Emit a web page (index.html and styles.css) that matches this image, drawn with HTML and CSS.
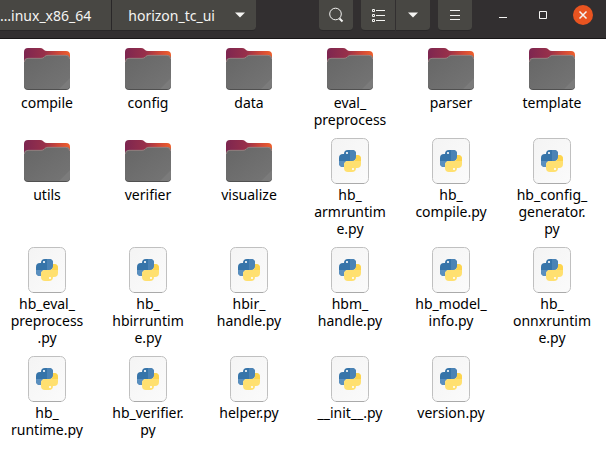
FILE: index.html
```html
<!DOCTYPE html>
<html lang="en">
<head>
<meta charset="utf-8">
<title>horizon_tc_ui</title>
<link rel="stylesheet" href="styles.css">
</head>
<body>
<svg class="defs" aria-hidden="true">
  <defs>
    <linearGradient id="back" x1="0" y1="0" x2="1" y2="0">
      <stop offset="0" stop-color="#7d2650"/><stop offset="0.45" stop-color="#98304a"/><stop offset="0.75" stop-color="#cf4838"/><stop offset="1" stop-color="#f0602c"/>
    </linearGradient>
    <linearGradient id="front" x1="0" y1="0" x2="1" y2="1">
      <stop offset="0" stop-color="#666"/><stop offset="1" stop-color="#757575"/>
    </linearGradient>
    <linearGradient id="sheet" x1="0" y1="0" x2="1" y2="1">
      <stop offset="0" stop-color="#f4f4f4"/><stop offset="1" stop-color="#fbfbfb"/>
    </linearGradient>
    <path id="snake" d="M18 17a4 4 0 0 1 4-4h4a4 4 0 0 1 4 4v3a4 4 0 0 1-4 4h-4a4 4 0 0 0-4 4v2h-1a4 4 0 0 1-4-4v-5a4 4 0 0 1 4-4z"/>
  </defs>
  <symbol id="folder" viewBox="0 0 48 48">
    <path fill="url(#back)" d="M1 7q0-4 4-4h12q2 0 3 1l1 1q1 1 3 1h19q4 0 4 4v12H1z"/>
    <path fill="#505050" d="M1 30h46v11q0 4-4 4H5q-4 0-4-4z"/>
    <path fill="url(#front)" d="M1 17q0-4 4-4h13q2 0 3-1l1-1q1-1 3-1h18q4 0 4 4v26q0 4-4 4H5q-4 0-4-4z"/>
    <path fill="none" stroke="#a8898a" stroke-width=".7" d="M1.400 17q0-3.700 3.600-3.700h13q2 0 3-1l1-1q1-1 3-1h18q3.600 0 3.600 3.700"/>
    <path fill="#7b7b7b" d="M47 33v7q0 4-4 4h-7z"/>
  </symbol>
  <symbol id="pyfile" viewBox="0 0 48 48">
    <rect x="5.500" y="1.500" width="37" height="45" rx="5" fill="url(#sheet)" stroke="#c0c0c0"/>
    <path stroke="#aaa" d="M10 46.500h28"/>
    <use href="#snake" fill="#3674a9"/>
    <path fill="#5a8fbf" d="M13 24h6.500a4 4 0 0 0-1.500 4v2h-1a4 4 0 0 1-4-4z"/>
    <path fill="#4b83b5" d="M24 13h2a4 4 0 0 1 4 4v3a4 4 0 0 1-4 4h-2z"/>
    <use href="#snake" fill="#ffe070" transform="rotate(180 24 24)"/>
    <path fill="#fdd44d" d="M35 24h-6.500a4 4 0 0 0 1.500-4v-2h1a4 4 0 0 1 4 4z"/>
    <circle cx="21" cy="16" r="1.100" fill="#fff"/>
    <circle cx="27" cy="32" r="1.100" fill="#fff"/>
  </symbol>
</svg>
<header class="bar">
  <nav class="path" aria-label="Location">
    <button class="crumb parent">…inux_x86_64</button>
    <button class="crumb current"><span>horizon_tc_ui</span><svg class="arrow" viewBox="0 0 10 6"><path d="M0 .5h10L5 5.500z"/></svg></button>
  </nav>
  <div class="tools">
    <button class="tool" aria-label="Search"><svg viewBox="0 0 16 16"><circle cx="7.500" cy="7" r="5.800"/><path stroke-width="2" d="M11.500 11.500L14.500 14.500"/></svg></button>
    <div class="group">
      <button class="tool" aria-label="List view"><svg viewBox="0 0 16 16"><path d="M6 3.500h9M6 8.500h9M6 13.500h9"/><path d="M2.500 2.500h2v2h-2zM2.500 7.500h2v2h-2zM2.500 12.500h2v2h-2z"/></svg></button>
      <button class="tool" aria-label="View options"><svg class="arrow" viewBox="0 0 10 6"><path d="M0 .5h10L5 5.500z"/></svg></button>
    </div>
    <button class="tool" aria-label="Menu"><svg viewBox="0 0 16 16"><path d="M3 3.500h10M3 8.500h10M3 12.500h10"/></svg></button>
  </div>
  <div class="controls">
    <button class="control" aria-label="Minimize"><svg viewBox="0 0 20 20"><path d="M6 12.500h8"/></svg></button>
    <button class="control" aria-label="Maximize"><svg viewBox="0 0 20 20"><path d="M6.500 6.500h7v7h-7z"/></svg></button>
    <button class="control close" aria-label="Close"><svg viewBox="0 0 20 20"><path stroke-width="1.500" d="M6.500 6.500l7 7M13.500 6.500l-7 7"/></svg></button>
  </div>
</header>
<main>
  <ul class="files">
    <li><svg><use href="#folder"/></svg><span>compile</span></li>
    <li><svg><use href="#folder"/></svg><span>config</span></li>
    <li><svg><use href="#folder"/></svg><span>data</span></li>
    <li><svg><use href="#folder"/></svg><span>eval_<br>preprocess</span></li>
    <li><svg><use href="#folder"/></svg><span>parser</span></li>
    <li><svg><use href="#folder"/></svg><span>template</span></li>
    <li><svg><use href="#folder"/></svg><span>utils</span></li>
    <li><svg><use href="#folder"/></svg><span>verifier</span></li>
    <li><svg><use href="#folder"/></svg><span>visualize</span></li>
    <li><svg><use href="#pyfile"/></svg><span>hb_<br>armruntim<br>e.py</span></li>
    <li><svg><use href="#pyfile"/></svg><span>hb_<br>compile.py</span></li>
    <li><svg><use href="#pyfile"/></svg><span>hb_config_<br>generator.<br>py</span></li>
    <li><svg><use href="#pyfile"/></svg><span>hb_eval_<br>preprocess<br>.py</span></li>
    <li><svg><use href="#pyfile"/></svg><span>hb_<br>hbirruntim<br>e.py</span></li>
    <li><svg><use href="#pyfile"/></svg><span>hbir_<br>handle.py</span></li>
    <li><svg><use href="#pyfile"/></svg><span>hbm_<br>handle.py</span></li>
    <li><svg><use href="#pyfile"/></svg><span>hb_model_<br>info.py</span></li>
    <li><svg><use href="#pyfile"/></svg><span>hb_<br>onnxruntim<br>e.py</span></li>
    <li><svg><use href="#pyfile"/></svg><span>hb_<br>runtime.py</span></li>
    <li><svg><use href="#pyfile"/></svg><span>hb_verifier.<br>py</span></li>
    <li><svg><use href="#pyfile"/></svg><span>helper.py</span></li>
    <li><svg><use href="#pyfile"/></svg><span>__init__.py</span></li>
    <li><svg><use href="#pyfile"/></svg><span>version.py</span></li>
  </ul>
</main>
</body>
</html>
```
FILE: styles.css
```css
body {
  margin: 0;
  background: #fff;
  color: #000;
  font: 14px/17px "Noto Sans", "Open Sans", sans-serif;
}

.defs {
  position: absolute;
  width: 0;
  height: 0;
}

button {
  box-sizing: border-box;
  margin: 0;
  padding: 0;
  border: 0;
  background: none;
  color: #f4f4f2;
  font: inherit;
}

button svg {
  display: block;
  fill: none;
  stroke: #f4f4f2;
}

.bar {
  display: flex;
  align-items: flex-start;
  justify-content: flex-end;
  padding: 0 13px 7px 0;
  border-bottom: 1px solid #181617;
  background: #322f30;
}

.path {
  display: flex;
  margin-right: auto;
}

.crumb,
.tool {
  height: 31px;
  background: #484743;
  border-bottom: 1px solid #292728;
}

.crumb {
  display: flex;
  align-items: center;
}

.parent {
  padding: 0 20px 0 0;
  border-right: 1px solid #292728;
}

.current {
  gap: 20px;
  padding: 0 11px 0 16px;
  border-radius: 0 0 4px 0;
}

svg.arrow {
  width: 10px;
  height: 6px;
  fill: #f4f4f2;
  stroke: none;
}

.tools {
  display: flex;
  gap: 8px;
  margin-right: 21px;
}

.group {
  display: flex;
  gap: 1px;
}

.tool {
  display: grid;
  place-items: center;
  width: 34px;
  border-radius: 0 0 4px 4px;
}

.tool svg:not(.arrow) {
  width: 16px;
  height: 16px;
}

.group .tool:first-child {
  border-radius: 0 0 0 4px;
}

.group .tool:last-child {
  border-radius: 0 0 4px 0;
}

.controls {
  display: flex;
  gap: 20px;
  padding-top: 5px;
}

.control {
  width: 20px;
  height: 20px;
  border-radius: 50%;
}

.close {
  background: #e95420;
}

.files {
  display: grid;
  grid-template-columns: repeat(auto-fill, 78px);
  gap: 9px 23px;
  margin: 0;
  padding: 6px 15px 0 8px;
  list-style: none;
}

.files li {
  display: flex;
  flex-direction: column;
  align-items: center;
  gap: 1px;
  text-align: center;
  white-space: nowrap;
}

.files svg {
  width: 48px;
  height: 48px;
}
```
